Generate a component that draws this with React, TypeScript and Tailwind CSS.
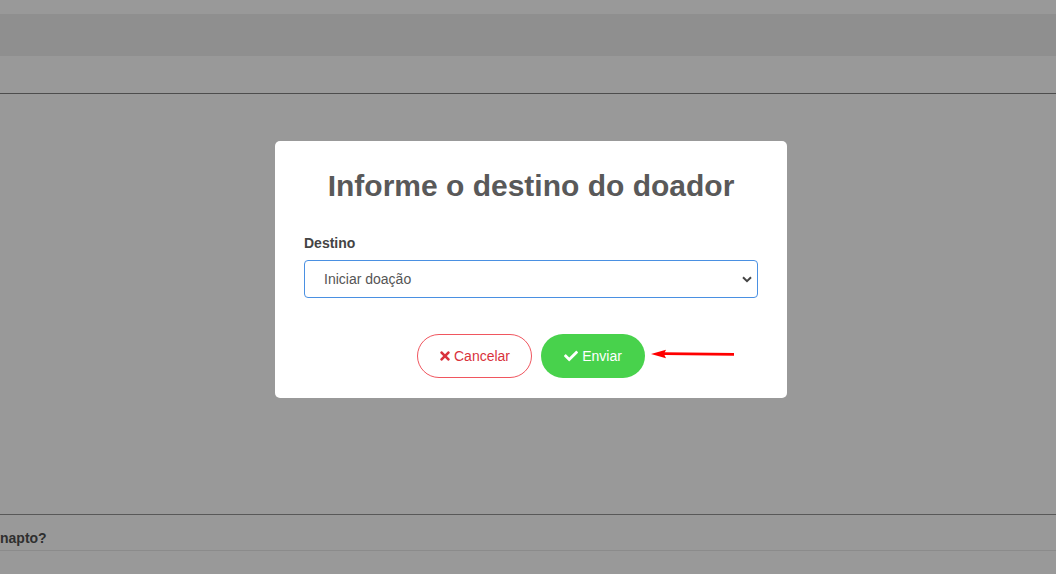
import { FaCheck, FaTimes } from 'react-icons/fa';

function Chevron() {
  return (
    <svg width="10" height="7" viewBox="0 0 10 7" className="pointer-events-none absolute right-[6px] top-[16px]">
      <path d="M1 1.2 L5 5.2 L9 1.2" fill="none" stroke="#444" strokeWidth="2" />
    </svg>
  );
}

function RedArrow() {
  return (
    <svg width="86" height="12" viewBox="0 0 86 12" className="absolute left-[650px] top-[348px]">
      <path d="M14 5.6 L84 6.4" stroke="#ff0000" strokeWidth="2.6" fill="none" />
      <path d="M1 6 L16 1.8 L14 6 L16 10.2 Z" fill="#ff0000" />
    </svg>
  );
}

export default function App() {
  return (
    <div
      className="relative h-[574px] w-[1056px] overflow-hidden bg-[#999999]"
      style={{ fontFamily: '"Liberation Sans", Arial, sans-serif' }}
    >
      {/* page behind the overlay */}
      <div className="h-[14px]" />
      <div className="h-[42px] bg-[#8f8f8f]" />
      <div className="h-[37px]" />
      <div className="h-px bg-[#4d4d4d]" />
      <div className="h-[420px]" />
      <div className="h-px bg-[#585858]" />
      <div className="flex h-[35px] items-center pt-[12px] text-[14px] font-bold text-[#2f2f2f]">napto?</div>
      <div className="h-px bg-[#8b8b8b]" />

      {/* dialog */}
      <div className="absolute inset-0 flex justify-center pl-[6px] pt-[141px]">
        <div className="h-[257px] w-[512px] rounded-[5px] bg-white px-[29px]">
          <h2 className="pt-[27px] text-center text-[30px] font-bold leading-[36px] text-[#595959]">
            Informe o destino do doador
          </h2>
          <label className="mt-[30px] block text-[14px] font-bold leading-[19px] text-[#444]">Destino</label>
          <div className="relative mt-[7px]">
            <select
              className="h-[38px] w-full appearance-none rounded-[4px] border border-[#4a90e2] bg-white pl-[19px] text-[14px] text-[#555] outline-none"
              defaultValue="iniciar"
            >
              <option value="iniciar">Iniciar doação</option>
            </select>
            <Chevron />
          </div>
          <div className="mt-[36px] flex justify-center gap-[9px]">
            <button className="flex h-[44px] w-[115px] items-center justify-center gap-[3px] rounded-full border border-[#f0565f] bg-white text-[14px] text-[#d9323c]">
              <FaTimes className="h-[14px] w-[12px] text-[#d9323c]" />
              Cancelar
            </button>
            <button className="flex h-[44px] w-[104px] items-center justify-center gap-[4px] rounded-full bg-[#48d24c] text-[14px] text-white">
              <FaCheck className="h-[14px] w-[14px]" />
              Enviar
            </button>
          </div>
        </div>
      </div>

      <RedArrow />
    </div>
  );
}
